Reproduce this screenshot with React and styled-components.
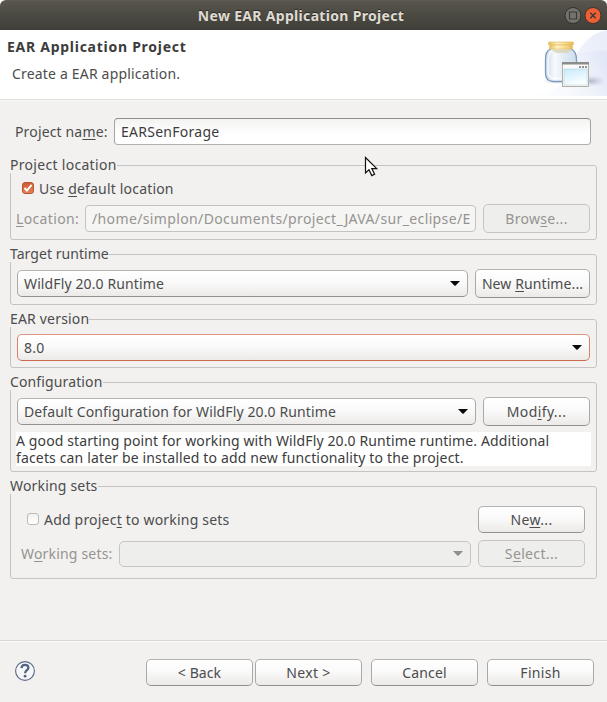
import React from 'react';
import styled, { createGlobalStyle, css } from 'styled-components';

const GlobalStyle = createGlobalStyle`
  * { box-sizing: border-box; }
  body { margin: 0; background: #fff; }
`;

const Dialog = styled.main`
  position: relative;
  display: flex;
  flex-direction: column;
  width: 607px;
  height: 702px;
  overflow: hidden;
  background: #f2f1f0;
  color: #4c4c4c;
  font: 14px/17px "Noto Sans", "Open Sans", sans-serif;
  white-space: nowrap;
`;

const Text = styled.span`
  letter-spacing: ${(p) => p.$track ?? 0.18}px;
  u { text-underline-offset: 2px; text-decoration-thickness: 1px; text-decoration-skip-ink: none; }
`;

const TitleCorners = styled.div`
  flex: none;
  background: #fff;
`;

const TitleBar = styled.header`
  display: grid;
  grid-template-columns: 1fr 18px 18px;
  column-gap: 2px;
  align-items: center;
  height: 30px;
  padding: 0 5px 1px 40px;
  border-radius: 6px 6px 0 0;
  border-top: 1px solid #5d5b53;
  background: linear-gradient(#57554c, #3f3e38);
  color: #dfdbd2;
  font-weight: 700;
  text-align: center;
  text-shadow: 0 -1px #2b2a27;
`;

const Banner = styled.section`
  display: flex;
  justify-content: space-between;
  flex: none;
  height: 70px;
  background: #fff;
  border-bottom: 1px solid #dcdbd9;
`;

const BannerCopy = styled.div`
  display: flex;
  flex-direction: column;
  gap: 10px;
  padding: 8px 0 0 7px;
`;

const Heading = styled.h1`
  margin: 0;
  color: #3c3c3c;
  font: 700 14px/17px "Noto Sans", sans-serif;
`;

const Subheading = styled.div`
  padding-left: 5px;
`;

const Body = styled.section`
  flex: 1;
  padding: 18px 10px 0;
  border-top: 1px solid #f9f9f8;
`;

const NameRow = styled.div`
  display: flex;
  align-items: center;
  height: 27px;
  margin: -1px 6px 13px 5px;
`;

const NameLabel = styled.label`
  width: 99px;
`;

const Field = styled.div`
  flex: 1;
  display: flex;
  align-items: center;
  min-width: 0;
  height: 27px;
  padding: 0 6px;
  border: 1px solid;
  border-color: #8f8e8c #a5a4a2 #b0afac;
  border-radius: 4px;
  background: linear-gradient(#f3f3f2, #fff 60%);
  color: #3c3c3c;
  overflow: hidden;
  ${(p) => p.$disabled && css`
    border-color: #c4c3c0;
    background: #f5f5f4;
    color: #959490;
  `}
`;

const Group = styled.fieldset`
  min-width: 0;
  height: ${(p) => p.$height}px;
  margin: 0 0 7px;
  padding: 0;
  border: 1px solid #c5c4c2;
  border-radius: 3px;
`;

const Legend = styled.legend`
  height: 15px;
  margin-left: -1px;
  padding: 0;
  line-height: 13px;
`;

const ControlRow = styled.div`
  display: flex;
  align-items: center;
  gap: 7px;
  padding: ${(p) => p.$pad || '7px 6px 0'};
`;

const CheckRow = styled.label`
  flex: 1;
  display: flex;
  align-items: center;
  gap: 5px;
  height: ${(p) => p.$height}px;
  padding-left: ${(p) => p.$indent}px;
`;

const CheckBox = styled.span`
  display: grid;
  place-items: center;
  width: 12px;
  height: 12px;
  margin-bottom: 2px;
  border: 1px solid #bcbbb8;
  border-radius: 3px;
  background: linear-gradient(#f1f1f0, #fff);
  ${(p) => p.$checked && css`
    border-color: #bb5230;
    background: linear-gradient(#cd5c35, #e38158);
  `}
`;

const raised = css`
  border: 1px solid;
  border-color: #b4b3b0 #aaa9a6 #92918e;
  background: linear-gradient(#fff, #fafafa 45%, #eceae8);
`;

const flat = css`
  border: 1px solid #c6c5c2;
  background: #eeeeec;
  color: #959490;
`;

const PushButton = styled.button`
  flex: none;
  width: ${(p) => p.$width || 107}px;
  height: ${(p) => p.$height || 27}px;
  margin: 0;
  padding: 0;
  border-radius: 5px;
  color: #4c4c4c;
  font: inherit;
  text-align: center;
  ${raised}
  ${(p) => p.$disabled && flat}
`;

const Combo = styled.div`
  flex: 1;
  display: flex;
  align-items: center;
  justify-content: space-between;
  height: ${(p) => p.$height || 27}px;
  padding: 0 6px 0 6px;
  border-radius: 5px;
  ${raised}
  ${(p) => p.$focused && css`border-color: #dc9680 #d98467 #c9694a;`}
  ${(p) => p.$disabled && flat}
`;

const Description = styled.p`
  height: 34px;
  margin: 6px 5px 0;
  background: #fff;
  color: #3c3c3c;
  line-height: 17px;
`;

const Line = styled(Text)`
  display: block;
`;

const FieldLabel = styled.span`
  width: ${(p) => p.$width}px;
  color: #959490;
`;

const Footer = styled.footer`
  display: flex;
  flex: none;
  height: 62px;
  padding: 18px 13px 0 15px;
  border-top: 1px solid #d9d8d6;
  box-shadow: inset 0 1px #fbfbfa;
`;

const HelpSlot = styled.div`
  flex: 1;
  padding-top: 1px;
`;

const FooterButtons = styled.div`
  display: flex;
  gap: 9px;
`;

const PagerButtons = styled.div`
  display: flex;
  gap: 2px;
`;

const Pointer = styled.svg`
  position: absolute;
  left: 364px;
  top: 155px;
`;

const Arrow = ({ muted }) => (
  <svg width="12" height="7" viewBox="0 0 12 7">
    <path d="M1 1h10L6.7 5.4Q6 6 5.3 5.4Z" fill={muted ? '#8f8f8b' : '#0a0a0a'} />
  </svg>
);

const MaximizeIcon = () => (
  <svg width="18" height="18" viewBox="0 0 18 18">
    <circle cx="9" cy="9.5" r="8" fill="#75736b" stroke="#302f2b" />
    <path d="M5.5 6h7v7h-7z" fill="none" stroke="#3b3a35" strokeWidth="1.2" />
  </svg>
);

const CloseIcon = () => (
  <svg width="18" height="18" viewBox="0 0 18 18">
    <circle cx="9" cy="9.5" r="8" fill="#ed6036" stroke="#44332b" />
    <path d="M6.3 6.8l5.4 5.4M11.7 6.8l-5.4 5.4" stroke="#403a31" strokeWidth="1.5" />
  </svg>
);

const BannerArt = () => (
  <svg width="75" height="66" viewBox="0 0 75 66">
    <defs>
      <linearGradient id="sweep" x1="0" y1="1" x2="1" y2="0.3">
        <stop offset="0" stopColor="#fff" />
        <stop offset="1" stopColor="#dbe3f6" />
      </linearGradient>
      <linearGradient id="sweepInner" x1="0" y1="0.8" x2="1" y2="0.5">
        <stop offset="0" stopColor="#fff" stopOpacity="0" />
        <stop offset="1" stopColor="#d3dcf2" />
      </linearGradient>
      <linearGradient id="lid" x1="0" x2="1">
        <stop offset="0" stopColor="#e6bd58" />
        <stop offset="0.35" stopColor="#fff3c4" />
        <stop offset="0.7" stopColor="#f6d985" />
        <stop offset="1" stopColor="#e7b957" />
      </linearGradient>
      <linearGradient id="glass" x1="0" x2="1">
        <stop offset="0" stopColor="#cddbe9" />
        <stop offset="0.3" stopColor="#f6fafd" />
        <stop offset="0.6" stopColor="#e1ebf4" />
        <stop offset="1" stopColor="#d0deeb" />
      </linearGradient>
      <linearGradient id="pane" x1="0" y1="0" x2="0.4" y2="1">
        <stop offset="0" stopColor="#c7eafa" />
        <stop offset="1" stopColor="#fafeff" />
      </linearGradient>
      <radialGradient id="shade">
        <stop offset="0" stopColor="#8b90ad" stopOpacity="0.6" />
        <stop offset="1" stopColor="#b9bdd6" stopOpacity="0" />
      </radialGradient>
    </defs>
    <path d="M75 0C50 5 42 28 34 48Q26 62 0 66H75Z" fill="url(#sweep)" opacity="0.6" />
    <path d="M75 21C58 19 36 24 25 39V66H75Z" fill="url(#sweepInner)" opacity="0.4" />
    <ellipse cx="59" cy="51" rx="15" ry="6" fill="url(#shade)" />
    <ellipse cx="27" cy="51" rx="17" ry="3" fill="url(#shade)" />
    <path d="M20 18C14 21 13.500 24 13.500 30V43Q13.500 51 21 51.500H37Q44.500 51 44.500 43V30C44.500 24 43 21 38 18Z" fill="url(#glass)" stroke="#7d9bc0" strokeWidth="1.300" />
    <path d="M20 21C16.500 23 16 26 16 31V42Q16 47 22 48.500H34" fill="none" stroke="#fff" strokeWidth="1.400" opacity="0.8" />
    <path d="M19 19.500H40L36 23H24Z" fill="#d6cfaa" opacity="0.7" />
    <rect x="16.500" y="12" width="25" height="3" rx="1" fill="url(#lid)" stroke="#e0b24f" strokeWidth="0.600" />
    <rect x="17.500" y="15" width="23" height="4" rx="1" fill="url(#lid)" stroke="#e4bd65" strokeWidth="0.600" />
    <rect x="30.500" y="32.500" width="26" height="24" fill="#fafafa" stroke="#b3b09f" />
    <path d="M30 32H57V34.500H30Z" fill="#8c8c89" />
    <path d="M47 36h2v2h-2zM50 36h2v2h-2zM53 36h2v2h-2z" fill="#929394" />
    <rect x="32" y="39" width="23" height="16" fill="url(#pane)" stroke="#a6cfe0" strokeWidth="0.500" />
  </svg>
);

const HelpIcon = () => (
  <svg width="21" height="21" viewBox="0 0 21 21">
    <circle cx="10" cy="11" r="9.400" fill="#f6f7f9" stroke="#586884" strokeWidth="1.100" />
    <path d="M6.500 8.100C6.700 5.800 8.100 4.900 10 4.900C12.100 4.900 13.400 6.100 13.400 7.800C13.400 10.200 10.100 10.200 10.100 13.200" fill="none" stroke="#536483" strokeWidth="2.300" />
    <circle cx="10.100" cy="16.200" r="1.400" fill="#536483" />
  </svg>
);

export default function App() {
  return (
    <Dialog>
      <GlobalStyle />
      <TitleCorners>
        <TitleBar>
          <Text $track={0.32}>New EAR Application Project</Text>
          <MaximizeIcon />
          <CloseIcon />
        </TitleBar>
      </TitleCorners>

      <Banner>
        <BannerCopy>
          <Heading><Text $track={0.73}>EAR Application Project</Text></Heading>
          <Subheading><Text>Create a EAR application.</Text></Subheading>
        </BannerCopy>
        <BannerArt />
      </Banner>

      <Body>
        <NameRow>
          <NameLabel><Text $track={0.15}>Project na<u>m</u>e:</Text></NameLabel>
          <Field><Text $track={0.27}>EARSenForage</Text></Field>
        </NameRow>

        <Group $height={82}>
          <Legend><Text $track={0.3}>Project location</Text></Legend>
          <CheckRow $height={31} $indent={11}>
            <CheckBox $checked>
              <svg width="10" height="10" viewBox="0 0 10 10">
                <path d="M1.500 5l2.400 2.500L8.600 1.800" fill="none" stroke="#fff" strokeWidth="1.900" />
              </svg>
            </CheckBox>
            <Text>Use <u>d</u>efault location</Text>
          </CheckRow>
          <ControlRow $pad="0 6px 0 5px">
            <FieldLabel $width={62}><Text $track={0.35}><u>L</u>ocation:</Text></FieldLabel>
            <Field $disabled>
              <Text $track={0.37}>/home/simplon/Documents/project_JAVA/sur_eclipse/E</Text>
            </Field>
            <PushButton $height={29} $disabled><Text $track={0.3}>Brow<u>s</u>e...</Text></PushButton>
          </ControlRow>
        </Group>

        <Group $height={58}>
          <Legend><Text $track={0.05}>Target runtime</Text></Legend>
          <ControlRow>
            <Combo><Text $track={0.12}>WildFly 20.0 Runtime</Text><Arrow /></Combo>
            <PushButton $width={115} $height={29}><Text $track={0.1}>New <u>R</u>untime...</Text></PushButton>
          </ControlRow>
        </Group>

        <Group $height={56}>
          <Legend><Text>EAR version</Text></Legend>
          <ControlRow>
            <Combo $focused><Text $track={0.25}>8.0</Text><Arrow /></Combo>
          </ControlRow>
        </Group>

        <Group $height={97}>
          <Legend><Text $track={0.13}>Configuration</Text></Legend>
          <ControlRow>
            <Combo><Text $track={0.12}>Default Configuration for WildFly 20.0 Runtime</Text><Arrow /></Combo>
            <PushButton $height={29}><Text $track={0.4}>Mod<u>i</u>fy...</Text></PushButton>
          </ControlRow>
          <Description>
            <Line $track={0.12}>A good starting point for working with WildFly 20.0 Runtime runtime. Additional</Line>
            <Line $track={0.15}>facets can later be installed to add new functionality to the project.</Line>
          </Description>
        </Group>

        <Group $height={100}>
          <Legend><Text $track={0.18}>Working sets</Text></Legend>
          <ControlRow $pad="12px 11px 0 0">
            <CheckRow $height={27} $indent={16}>
              <CheckBox />
              <Text $track={0.2}>Add projec<u>t</u> to working sets</Text>
            </CheckRow>
            <PushButton><Text $track={0.35}>Ne<u>w</u>...</Text></PushButton>
          </ControlRow>
          <ControlRow $pad="7px 11px 0 10px">
            <FieldLabel $width={91}><Text>W<u>o</u>rking sets:</Text></FieldLabel>
            <Combo $disabled $height={26}><span /><Arrow muted /></Combo>
            <PushButton $disabled><Text $track={0.35}>S<u>e</u>lect...</Text></PushButton>
          </ControlRow>
        </Group>
      </Body>

      <Footer>
        <HelpSlot><HelpIcon /></HelpSlot>
        <FooterButtons>
          <PagerButtons>
            <PushButton><Text $track={0.1}>&lt; Back</Text></PushButton>
            <PushButton><Text $track={0.35}>Next &gt;</Text></PushButton>
          </PagerButtons>
          <PushButton><Text>Cancel</Text></PushButton>
          <PushButton><Text $track={0.3}>Finish</Text></PushButton>
        </FooterButtons>
      </Footer>

      <Pointer width="16" height="23" viewBox="0 0 16 23">
        <path d="M1.500 2.500V18L5 14.800L7.800 20.600L10.600 19.200L7.800 13.600H12.700Z" fill="#fff" stroke="#111" strokeWidth="1.200" />
      </Pointer>
    </Dialog>
  );
}
